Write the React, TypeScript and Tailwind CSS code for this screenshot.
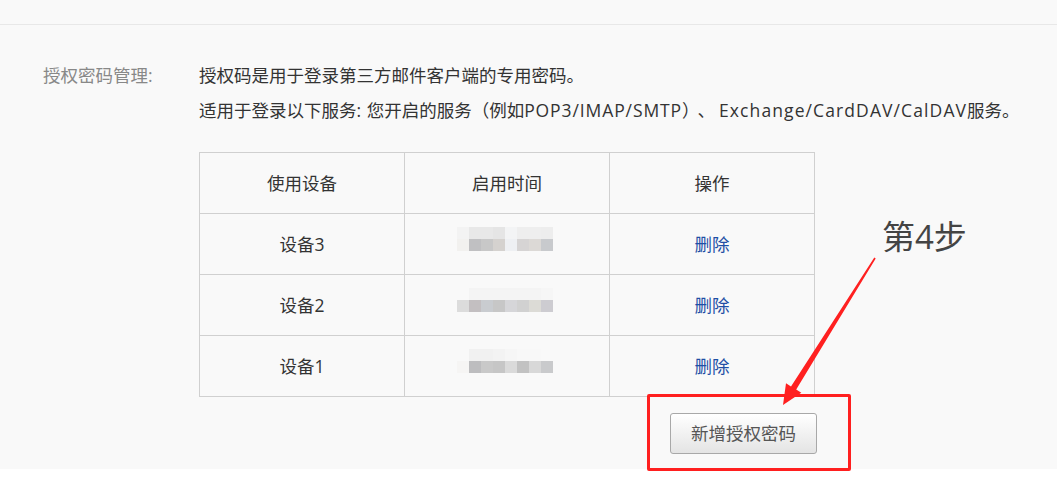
const rows = [
  {
    name: '设备3',
    blur: [
      ['#f3f3f3', '#e8e8e8', '#e8e8e8', '#e5e5e5', '#f3f4f5', '#eeeeee', '#eeeeee', '#ededed'],
      ['#f2f1ef', '#c0c0c2', '#c8c8c8', '#d5d2cf', '#eef0f3', '#d6d4d4', '#dcd9d6', '#c8cacd'],
    ],
  },
  {
    name: '设备2',
    blur: [
      ['#f9f9f9', '#f4f4f4', '#f4f4f4', '#f4f4f4', '#f4f4f4', '#f4f4f4', '#f4f4f4', '#f6f6f6'],
      ['#dcdcdc', '#c3bfc1', '#c9ccd0', '#c7c7c7', '#d6d6d9', '#d1d1d1', '#dcdbd6', '#cdccd1'],
    ],
  },
  {
    name: '设备1',
    blur: [
      ['#f9f9f9', '#f1f1f1', '#f1f1f1', '#f3f3f3', '#f6f6f6', '#f8f8f8', '#f8f8f8', '#f9f9f9'],
      ['#f6f5f4', '#bdbdbf', '#c9c9c9', '#c6c6c6', '#dadada', '#c2c2c2', '#d8d8d8', '#c9cacc'],
    ],
  },
]

function Blur({ grid }: { grid: string[][] }) {
  return (
    <div className="flex flex-col -translate-x-[2px] translate-y-[-5px]">
      {grid.map((line, i) => (
        <div key={i} className="flex">
          {line.map((c, j) => (
            <div key={j} className="w-[12px] h-[12px]" style={{ background: c }} />
          ))}
        </div>
      ))}
    </div>
  )
}

function App() {
  return (
    <div
      className="relative w-[1057px] h-[477px] bg-white overflow-hidden [text-spacing-trim:space-all]"
      style={{ fontFamily: '"Open Sans", "Noto Sans CJK SC", sans-serif' }}
    >
      <div className="h-[469px] bg-[#f9f9f9]">
        <div className="h-[25px] border-b border-[#e8e8e8]" />

        <div className="flex pt-[33px] text-[17.5px] leading-[35px]">
          <div className="w-[199px] pl-[43px] text-[#888] shrink-0">授权密码管理:</div>
          <div className="text-[#333]">
            <p>授权码是用于登录第三方邮件客户端的专用密码。</p>
            <p>
              适用于登录以下服务:<span className="ml-[1px]"> </span>您开启的服务（例如
              <span className="tracking-[0.9px]">POP3/IMAP/SMTP</span>）
              <span className="ml-[-2px] mr-[4px]">、</span>
              <span className="tracking-[1.1px]">Exchange/CardDAV/CalDAV</span>服务。
            </p>

            <table className="mt-[24px] w-[616px] border-collapse table-fixed text-[#333] text-[17.5px]">
              <thead>
                <tr className="h-[61px]">
                  <th className="border border-[#d0d0d0] font-normal">使用设备</th>
                  <th className="border border-[#d0d0d0] font-normal">启用时间</th>
                  <th className="border border-[#d0d0d0] font-normal">操作</th>
                </tr>
              </thead>
              <tbody>
                {rows.map((r) => (
                  <tr key={r.name} className="h-[61px]">
                    <td className="border border-[#d0d0d0] text-center">{r.name}</td>
                    <td className="border border-[#d0d0d0]">
                      <div className="flex justify-center">
                        <Blur grid={r.blur} />
                      </div>
                    </td>
                    <td className="border border-[#d0d0d0] text-center text-[#1f4fa5]">删除</td>
                  </tr>
                ))}
              </tbody>
            </table>

            <div className="w-[618px] flex justify-end mt-[16px]">
              <button className="w-[147px] h-[41px] rounded-[3px] border border-[#a8a8a8] bg-gradient-to-b from-white to-[#e4e4e4] text-[#555] text-[17.5px] leading-none">
                新增授权密码
              </button>
            </div>
          </div>
        </div>
      </div>

      {/* annotation overlay */}
      <div className="absolute left-[647px] top-[394px] w-[204px] h-[77px] border-[3px] border-[#ff1f1f] rounded-[2px] pointer-events-none" />
      <div className="absolute left-[882px] top-[213px] text-[33px] leading-[48px] text-[#444] pointer-events-none">
        第4步
      </div>
      <svg className="absolute inset-0 pointer-events-none" width="1057" height="477" viewBox="0 0 1057 477">
        <polygon
          points="875.7,258.4 796.2,389.6 801.3,392.8 783,405 786,383.2 791,386.4 874.3,257.6"
          fill="#ff2020"
        />
      </svg>
    </div>
  )
}

export default App
